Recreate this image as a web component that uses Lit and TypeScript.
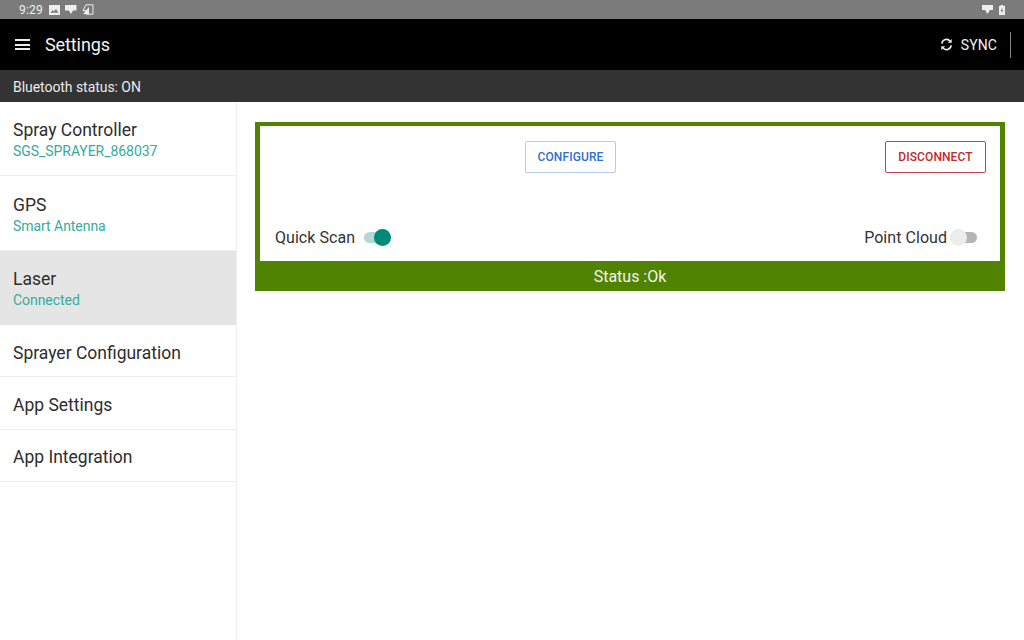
import { LitElement, html, css, svg } from "lit";
import { customElement } from "lit/decorators.js";

const items = [
  { t: "Spray Controller", s: "SGS_SPRAYER_868037" },
  { t: "GPS", s: "Smart Antenna" },
  { t: "Laser", s: "Connected", active: true },
  { t: "Sprayer Configuration" },
  { t: "App Settings" },
  { t: "App Integration" },
];

@customElement("app-root")
export class AppRoot extends LitElement {
  static styles = css`
    :host { display: flex; flex-direction: column; width: 1024px; height: 640px; overflow: hidden; background: #fff; font-family: Roboto, "Liberation Sans", sans-serif; color: #2b2b2b; }
    .status { height: 19px; flex: none; background: #7b7b7b; color: #eee; display: flex; align-items: center; padding: 0 19px; font-size: 12px; }
    .status .time { margin-right: 1px; letter-spacing: .2px; }
    .status .left { display: flex; align-items: center; gap: 5px; flex: 1; }
    .status .right { display: flex; align-items: center; gap: 6px; }
    .status svg { display: block; fill: #eee; }
    .bar { height: 51px; flex: none; background: #000; color: #f2f2f2; display: flex; align-items: center; padding: 0 13px 0 15px; }
    .menu { width: 15px; height: 11px; display: flex; flex-direction: column; justify-content: space-between; margin-right: 15px; }
    .menu i { display: block; height: 2px; background: #eee; }
    .title { font-size: 18px; flex: 1; letter-spacing: -.1px; }
    .sync { display: flex; align-items: center; font-size: 14px; letter-spacing: .1px; }
    .sync svg { width: 13px; height: 13px; margin-right: 8px; fill: none; stroke: #eee; stroke-width: 1.7; }
    .divider { width: 1px; height: 26px; background: #888; margin-left: 13px; }
    .bt { box-sizing: border-box; height: 32px; flex: none; background: #333; color: #eaeaea; font-size: 14px; display: flex; align-items: center; padding: 1px 0 0 13px; letter-spacing: -.05px; }
    .main { flex: 1; display: flex; min-height: 0; }
    .side { box-sizing: border-box; width: 237px; flex: none; border-right: 1px solid #f0f0f0; }
    .item { box-sizing: border-box; padding: 3px 13px 0; border-bottom: 1px solid #eee; display: flex; flex-direction: column; justify-content: center; }
    .item.two { height: 74.4px; }
    .item.one { height: 52.2px; padding-top: 4px; }
    .item.active { background: #e5e5e5; border-bottom-color: #e5e5e5; }
    .item .t { font-size: 17.5px; line-height: 22px; color: #2e2e2e; }
    .item .s { font-size: 14px; line-height: 19px; margin-top: 1px; color: #35ab9d; letter-spacing: -.05px; }
    .content { flex: 1; padding: 20px 19px 0 18px; min-width: 0; }
    .card { box-sizing: border-box; border: solid #508400; border-width: 4px 5px 0; height: 169px; display: flex; flex-direction: column; }
    .body { flex: 1; display: flex; flex-direction: column; justify-content: space-between; padding: 15px 14px 14px 15px; }
    .row { display: flex; align-items: center; justify-content: space-between; }
    .top { position: relative; justify-content: flex-end; }
    .btn { box-sizing: border-box; height: 32px; display: flex; align-items: center; justify-content: center; font-size: 12px; font-weight: 500; letter-spacing: .1px; background: #fff; border-radius: 2px; }
    .cfg { position: absolute; left: 250px; top: 0; width: 91px; color: #2f6fd0; border: 1px solid #b5cdec; }
    .dis { width: 101px; color: #c62828; border: 1px solid #c9404a; }
    .label { font-size: 16px; letter-spacing: .05px; color: #333; }
    .pair { display: flex; align-items: center; }
    .sw { position: relative; width: 27px; height: 11px; border-radius: 6px; }
    .sw::after { content: ""; position: absolute; top: -3px; width: 17px; height: 17px; border-radius: 50%; }
    .sw.on { background: #b5d8d4; margin-left: 9px; }
    .sw.on::after { right: 0; background: #00897b; }
    .sw.off { background: #b5b5b5; margin-right: 9px; margin-left: 3px; }
    .sw.off::after { left: 0; background: #ededed; }
    .foot { height: 30px; background: #508400; color: #f2f2f2; font-size: 16px; display: flex; align-items: center; justify-content: center; }
  `;

  render() {
    return html`
      <div class="status">
        <div class="left">
          <span class="time">9:29</span>
          <svg width="11" height="10" viewBox="0 0 11 10"><path fill-rule="evenodd" d="M0 0h11v10H0zM1.5 7.8h8L7 4 5 6.5 3.6 5z"/></svg>
          <svg width="12" height="9" viewBox="0 0 12 9"><path d="M0 0h11.5v5.5H8L6 9 3.8 5.5H0z"/></svg>
          <svg width="12" height="11" viewBox="0 0 12 11"><path fill="none" stroke="#eee" stroke-width="1" d="M4 .8h7v9.4H4V6.5H1z"/><path d="M1 10 7 3v7z"/></svg>
        </div>
        <div class="right">
          <svg width="11" height="9" viewBox="0 0 11 9"><path d="M0 0h11v5H8L5.5 9 3 5H0z"/></svg>
          <svg width="6" height="10" viewBox="0 0 6 10"><path fill-rule="evenodd" d="M1.5 0h3v1H6v9H0V1h1.5zM3.4 2.5 1.6 6h1.2l-.3 2.2L4.4 5H3.2z"/></svg>
        </div>
      </div>
      <div class="bar">
        <div class="menu"><i></i><i></i><i></i></div>
        <div class="title">Settings</div>
        <div class="sync">
          <svg viewBox="0 0 14 14">${svg`<path d="M2 6a5 5 0 0 1 9-2.4M12 8a5 5 0 0 1-9 2.4"/><path fill="#eee" stroke="none" d="M12.6 1v4.2H8.4zM1.4 13V8.8h4.2z"/>`}</svg>
          SYNC
          <div class="divider"></div>
        </div>
      </div>
      <div class="bt">Bluetooth status: ON</div>
      <div class="main">
        <nav class="side">
          ${items.map(
            (i) => html`<div class="item ${i.s ? "two" : "one"} ${i.active ? "active" : ""}">
              <div class="t">${i.t}</div>
              ${i.s ? html`<div class="s">${i.s}</div>` : ""}
            </div>`
          )}
        </nav>
        <section class="content">
          <div class="card">
            <div class="body">
              <div class="row top">
                <div class="btn cfg">CONFIGURE</div>
                <div class="btn dis">DISCONNECT</div>
              </div>
              <div class="row">
                <div class="pair"><span class="label">Quick Scan</span><div class="sw on"></div></div>
                <div class="pair"><span class="label">Point Cloud</span><div class="sw off"></div></div>
              </div>
            </div>
            <div class="foot">Status :Ok</div>
          </div>
        </section>
      </div>
    `;
  }
}
